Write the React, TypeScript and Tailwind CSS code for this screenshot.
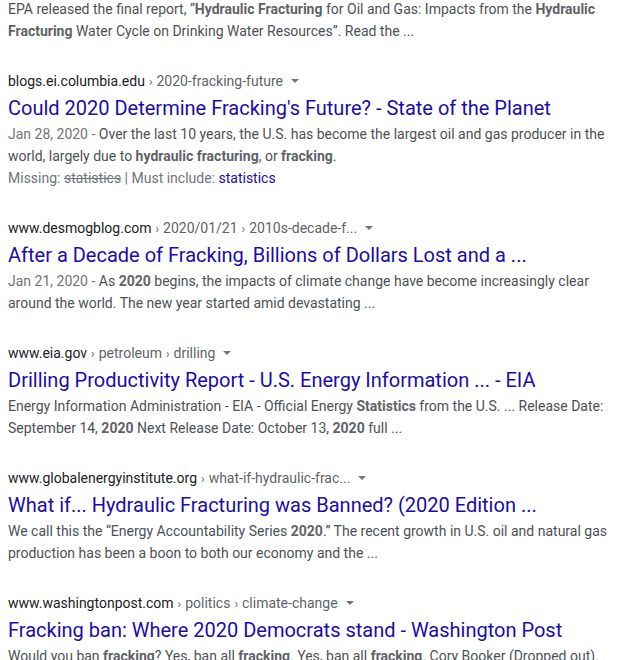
const results = [
  {
    domain: "blogs.ei.columbia.edu",
    path: ["2020-fracking-future"],
    title: "Could 2020 Determine Fracking's Future? - State of the Planet",
    date: "Jan 28, 2020",
    snippet: (
      <>
        Over the last 10 years, the U.S. has become the largest oil and gas producer in the world,
        largely due to <b>hydraulic fracturing</b>, or <b>fracking</b>.
      </>
    ),
    missing: true,
  },
  {
    domain: "www.desmogblog.com",
    path: ["2020/01/21", "2010s-decade-f..."],
    title: "After a Decade of Fracking, Billions of Dollars Lost and a ...",
    date: "Jan 21, 2020",
    snippet: (
      <>
        As <b>2020</b> begins, the impacts of climate change have become increasingly clear around
        the world. The new year started amid devastating ...
      </>
    ),
  },
  {
    domain: "www.eia.gov",
    path: ["petroleum", "drilling"],
    title: "Drilling Productivity Report - U.S. Energy Information ... - EIA",
    snippet: (
      <>
        Energy Information Administration - EIA - Official Energy <b>Statistics</b> from the U.S. ...
        Release Date: September 14, <b>2020</b> Next Release Date: October 13, <b>2020</b> full ...
      </>
    ),
  },
  {
    domain: "www.globalenergyinstitute.org",
    path: ["what-if-hydraulic-frac..."],
    title: "What if... Hydraulic Fracturing was Banned? (2020 Edition ...",
    snippet: (
      <>
        We call this the “Energy Accountability Series <b>2020</b>.” The recent growth in U.S. oil
        and natural gas production has been a boon to both our economy and the ...
      </>
    ),
  },
  {
    domain: "www.washingtonpost.com",
    path: ["politics", "climate-change"],
    title: "Fracking ban: Where 2020 Democrats stand - Washington Post",
    snippet: (
      <>
        Would you ban <b>fracking</b>? Yes, ban all <b>fracking</b>. Yes, ban all <b>fracking</b>.
        Cory Booker (Dropped out).
      </>
    ),
  },
];

function Caret() {
  return (
    <svg width="8" height="4" viewBox="0 0 8 4" className="ml-[8px] inline-block">
      <path d="M0 0h8L4 4z" fill="#70757a" />
    </svg>
  );
}

export default function App() {
  return (
    <div
      className="h-[660px] w-[627px] overflow-hidden bg-white pl-[8px] pr-[12px] [&_b]:font-bold [&_b]:text-[#5f6368]"
      style={{ fontFamily: "Roboto, Arial, sans-serif" }}
    >
      <div className="-mt-[2px] text-[14px] leading-[22px] text-[#4d5156]">
        EPA released the final report, “<b>Hydraulic Fracturing</b> for Oil and Gas: Impacts from the{" "}
        <b>Hydraulic Fracturing</b> Water Cycle on Drinking Water Resources”. Read the ...
      </div>
      {results.map((r) => (
        <div key={r.domain} className="pt-[27px]">
          <div className="flex h-[24px] items-center text-[14px] text-[#202124]">
            <span>{r.domain}</span>
            {r.path.map((p) => (
              <span key={p} className="text-[#5f6368]">
                <span className="px-[4px] text-[12px]">›</span>
                {p}
              </span>
            ))}
            <Caret />
          </div>
          <div className="h-[30px] text-[20px] leading-[30px] text-[#1a0dab]">{r.title}</div>
          <div className="text-[14px] leading-[22px] text-[#4d5156]">
            {r.date && <span className="text-[#70757a]">{r.date} - </span>}
            {r.snippet}
          </div>
          {r.missing && (
            <div className="text-[14px] leading-[22px] text-[#70757a]">
              Missing: <s>statistics</s> | Must include: <span className="text-[#1a0dab]">statistics</span>
            </div>
          )}
        </div>
      ))}
    </div>
  );
}
